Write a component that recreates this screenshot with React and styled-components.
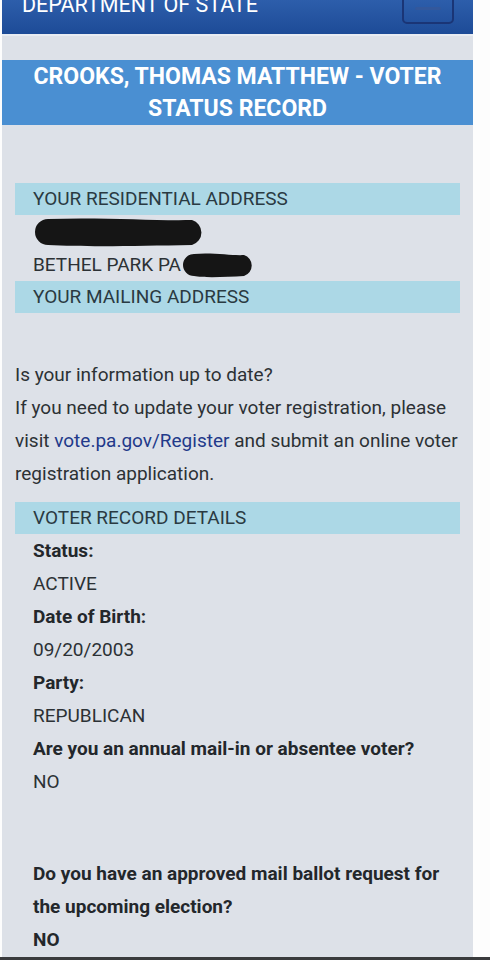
import React from 'react'
import styled, { createGlobalStyle } from 'styled-components'

const GlobalStyle = createGlobalStyle`
  body {
    margin: 0;
    background: #fdfdfd;
    font-family: Roboto, "Liberation Sans", Arial, sans-serif;
  }
`

function App() {
  return (
    <>
      <GlobalStyle />
      <Page>
        <Header>
          <Brand>DEPARTMENT OF STATE</Brand>
          <MenuButton>
            <MenuBar />
          </MenuButton>
        </Header>

        <TitleBand>CROOKS, THOMAS MATTHEW - VOTER STATUS RECORD</TitleBand>

        <Content>
          <SectionBand>YOUR RESIDENTIAL ADDRESS</SectionBand>
          <DetailLine>
            <Redaction width={174} height={30} />
          </DetailLine>
          <DetailLine>
            BETHEL PARK PA
            <Redaction width={76} height={26} />
          </DetailLine>
          <SectionBand>YOUR MAILING ADDRESS</SectionBand>

          <Paragraph>
            Is your information up to date?
            <br />
            If you need to update your voter registration, please visit{' '}
            <Link>vote.pa.gov/Register</Link> and submit an online voter
            registration application.
          </Paragraph>

          <SectionBand>VOTER RECORD DETAILS</SectionBand>
          <DetailLine bold>Status:</DetailLine>
          <DetailLine>ACTIVE</DetailLine>
          <DetailLine bold>Date of Birth:</DetailLine>
          <DetailLine>09/20/2003</DetailLine>
          <DetailLine bold>Party:</DetailLine>
          <DetailLine>REPUBLICAN</DetailLine>
          <DetailLine bold>Are you an annual mail-in or absentee voter?</DetailLine>
          <DetailLine>NO</DetailLine>

          <DetailLine bold spaced>
            Do you have an approved mail ballot request for the upcoming election?
          </DetailLine>
          <DetailLine bold>NO</DetailLine>
        </Content>
      </Page>
      <BottomEdge />
    </>
  )
}

// marker scribble over private info
function Redaction({ width, height }) {
  const r = height / 2
  return (
    <Blot width={width} height={height} viewBox={`0 0 ${width} ${height}`}>
      <path
        d={`M${r} 2 C${width * 0.4} 0 ${width * 0.7} 4 ${width - r} 3
            A${r - 2} ${r - 2} 0 0 1 ${width - r} ${height - 2}
            C${width * 0.6} ${height - 1} ${width * 0.3} ${height} ${r} ${height - 2}
            A${r - 2} ${r - 2} 0 0 1 ${r} 2 Z`}
        fill="#151515"
      />
    </Blot>
  )
}

// Styled Components
// ====================================================
const Page = styled.div`
  width: 471px;
  margin-left: 2px;
  height: 957px;
  background: #dde1e8;
  overflow: hidden;
`

const Header = styled.header`
  height: 34px;
  overflow: hidden;
  display: flex;
  align-items: flex-end;
  justify-content: space-between;
  padding: 0 19px 0 20px;
  background: linear-gradient(#2d5eab, #1d4b97);
  border-bottom: 2px solid #e8ecf2;
`

const Brand = styled.div`
  color: #ffffff;
  font-size: 21.5px;
  line-height: 22px;
  margin-bottom: 18px;
`

const MenuButton = styled.div`
  width: 52px;
  height: 40px;
  margin-bottom: 10px;
  box-sizing: border-box;
  border: 2px solid #1a3576;
  border-radius: 5px;
  display: flex;
  align-items: flex-end;
  justify-content: center;
  padding-bottom: 12px;
`

const MenuBar = styled.div`
  width: 26px;
  height: 3px;
  background: #33589c;
  border-radius: 2px;
`

const TitleBand = styled.h1`
  margin: 24px 0 0;
  padding: 1px 20px 0;
  height: 65px;
  box-sizing: border-box;
  background: #4a8fd2;
  color: #ffffff;
  font-size: 23px;
  line-height: 32px;
  font-weight: 700;
  text-align: center;
`

const Content = styled.div`
  padding: 58px 13px 0;
  color: #2c3135;
  font-size: 19px;
`

const SectionBand = styled.div`
  height: 32px;
  line-height: 32px;
  padding-left: 18px;
  background: #acd8e6;
  color: #2a3a42;
  font-size: 19px;
`

const DetailLine = styled.div`
  display: flex;
  align-items: center;
  min-height: 33px;
  line-height: 33px;
  padding-left: 18px;
  padding-right: 14px;
  font-weight: ${(p) => (p.bold ? 700 : 400)};
  color: ${(p) => (p.bold ? '#23272b' : '#2c3135')};
  margin-top: ${(p) => (p.spaced ? '59px' : '0')};
`

const Blot = styled.svg`
  display: block;
  flex-shrink: 0;
`

const Paragraph = styled.p`
  margin: 45px 0 12px;
  line-height: 33px;
  color: #2c3135;
`

const Link = styled.span`
  color: #22398a;
`

const BottomEdge = styled.div`
  height: 3px;
  background: #3a3b3d;
`
// ====================================================

export default App
